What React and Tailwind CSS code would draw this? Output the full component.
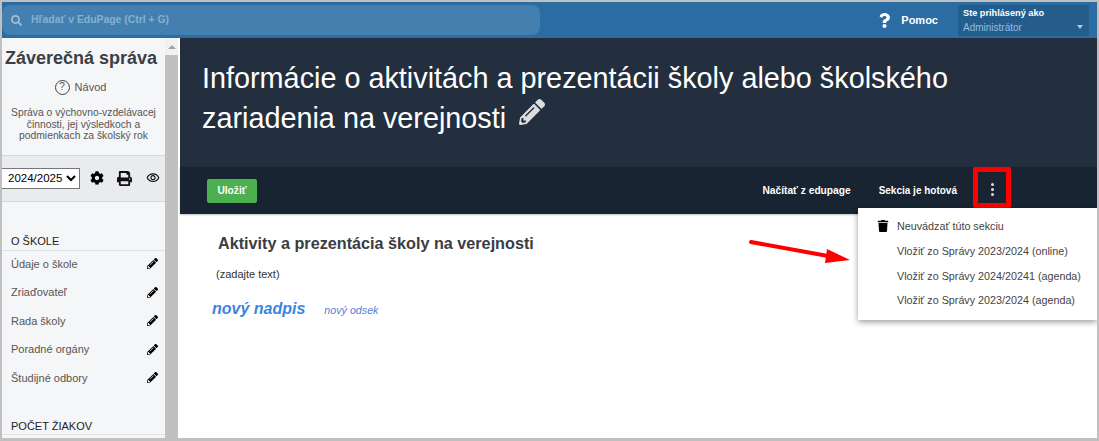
import React from 'react';
import { FaSearch, FaQuestion, FaCog, FaPrint, FaPencilAlt, FaTrash } from 'react-icons/fa';
import { MdOutlineVisibility } from 'react-icons/md';

const menuItems = ['Údaje o škole', 'Zriaďovateľ', 'Rada školy', 'Poradné orgány', 'Študijné odbory'];
const dropdownItems = ['Vložiť zo Správy 2023/2024 (online)', 'Vložiť zo Správy 2024/20241 (agenda)', 'Vložiť zo Správy 2023/2024 (agenda)'];

const Sidebar = () => (
  <aside className="w-[163px] shrink-0 bg-[#f5f6f8] overflow-hidden">
    <h1 className="pt-[9px] pl-[3px] text-[18px] leading-[22px] font-bold text-[#3c4045] whitespace-nowrap">Záverečná správa</h1>
    <div className="mt-[9px] pr-[6px] flex items-center justify-center gap-[5px] text-[11px] leading-[18px] text-[#555]">
      <span className="w-[15px] h-[15px] rounded-full border border-[#444] flex items-center justify-center text-[10px] leading-none">?</span>
      Návod
    </div>
    <p className="mt-[11px] text-center text-[10.3px] leading-[11.5px] text-[#555] whitespace-nowrap">
      Správa o výchovno-vzdelávacej<br />činnosti, jej výsledkoch a<br />podmienkach za školský rok
    </p>
    <div className="mt-[13px] h-[47px] bg-[#e9ebee] border-y border-[#d5d7da] flex items-center">
      <select defaultValue="2024/2025" className="-ml-[1px] w-[79px] h-[21px] pl-[2px] bg-white border border-[#767676] text-[11.5px] text-black">
        <option>2024/2025</option>
      </select>
      <FaCog className="ml-[10px] text-[14px] text-black" />
      <FaPrint className="ml-[13px] text-[15px] text-[#111]" />
      <MdOutlineVisibility className="ml-[14px] text-[14px] text-[#111]" />
    </div>
    <h2 className="mt-[32px] pl-[9px] pb-[1px] text-[11px] leading-[15px] text-[#222] border-b border-[#dfe1e5]">O ŠKOLE</h2>
    <ul className="-mt-[1px] mb-[27px]">
      {menuItems.map((item) => (
        <li key={item} className="h-[28.5px] pl-[9px] pr-[7px] flex items-center justify-between text-[11px] text-[#555]">
          {item}
          <FaPencilAlt className="text-[11px] text-black" />
        </li>
      ))}
    </ul>
    <h2 className="pl-[9px] text-[11px] leading-[15px] text-[#222] border-b border-[#dfe1e5]">POČET ŽIAKOV</h2>
  </aside>
);

const Dropdown = () => (
  <div className="absolute left-[678px] top-[170px] w-[239px] h-[112px] bg-white shadow-[0_2px_6px_rgba(0,0,0,0.4)] pt-[6px] text-[10.75px] text-[#444]">
    <div className="h-[24.7px] flex items-center pl-[19px]">
      <span className="w-[20px] shrink-0"><FaTrash className="text-[12px] text-black" /></span>
      Neuvádzať túto sekciu
    </div>
    {dropdownItems.map((item) => (
      <div key={item} className="h-[24.7px] flex items-center pl-[39px] whitespace-nowrap">{item}</div>
    ))}
  </div>
);

export default function App() {
  return (
    <div className="w-[1099px] h-[441px] bg-[#c0c0c0] pt-[2px] pl-[2px] pr-[2px] pb-[3px] font-['Liberation_Sans',Arial,sans-serif]">
      <div className="h-full flex flex-col overflow-hidden bg-white">
        <header className="h-[36px] shrink-0 bg-[#2b6ca3] flex items-center">
          <div className="w-[538px] h-[30px] rounded-[8px] bg-[#4380b0] flex items-center pl-[9px] text-[10.4px] font-bold text-[#86b0d0]">
            <FaSearch className="text-[11px] text-[#9cc0da] mr-[9px]" />
            Hľadať v EduPage (Ctrl + G)
          </div>
          <div className="ml-auto flex items-center text-white">
            <FaQuestion className="text-[15px]" />
            <span className="ml-[9px] text-[11px] font-bold">Pomoc</span>
          </div>
          <div className="ml-[20px] mr-[8px] w-[131px] h-[31px] rounded-[2px] bg-[#245d8c] px-[5px] pt-[1px] relative">
            <div className="text-[9.2px] leading-[14px] font-bold text-white">Ste prihlásený ako</div>
            <div className="text-[10px] leading-[16px] text-[#94bde0]">Administrátor</div>
            <span className="absolute right-[6px] bottom-[7px] border-x-[3px] border-x-transparent border-t-[4px] border-t-[#b5c9da]" />
          </div>
        </header>
        <div className="flex-1 flex min-h-0">
          <Sidebar />
          <div className="w-[13px] shrink-0 bg-[#c0c0c0] flex flex-col">
            <div className="h-[17px] bg-[#f1f1f1] flex items-center justify-center">
              <span className="border-x-[4px] border-x-transparent border-b-[4px] border-b-[#a3a3a3]" />
            </div>
          </div>
          <main className="relative flex-1 min-w-0 ml-[2px]">
            <div className="h-[129px] bg-[#232f3e] pl-[22px] pt-[20px] text-[28.8px] leading-[40px] text-white whitespace-nowrap">
              Informácie o aktivitách a prezentácii školy alebo školského<br />
              <span className="inline-flex items-center">zariadenia na verejnosti<FaPencilAlt className="ml-[13px] -mt-[12px] text-[26px] text-[#dcdcdc]" /></span>
            </div>
            <div className="h-[47px] bg-[#182431] flex items-center shadow-[0_1px_2px_rgba(0,0,0,0.25)] text-[10.2px] font-bold text-white">
              <button className="ml-[27px] w-[50px] h-[24px] rounded-[2px] bg-[#4caf50] text-[10.2px] font-bold">Uložiť</button>
              <span className="ml-auto">Načítať z edupage</span>
              <span className="ml-[28px] text-[10px]">Sekcia je hotová</span>
              <div className="ml-[16px] mr-[86px] self-start w-[38px] h-[41px] border-[5px] border-[#f00] rounded-[2px] pt-[4px] flex flex-col items-center justify-center gap-[2px]">
                <i className="w-[3px] h-[3px] rounded-full bg-[#ddd]" />
                <i className="w-[3px] h-[3px] rounded-full bg-[#ddd]" />
                <i className="w-[3px] h-[3px] rounded-full bg-[#ddd]" />
              </div>
            </div>
            <div className="pl-[38px] pt-[20px] text-[16.2px] leading-[18px] font-bold text-[#3a3d42]">Aktivity a prezentácia školy na verejnosti</div>
            <div className="pl-[36px] mt-[15px] text-[11px] leading-[14px] text-[#333]">(zadajte text)</div>
            <div className="pl-[32px] mt-[16px] flex items-baseline italic text-[#3a85e0]">
              <span className="text-[16px] font-bold">nový nadpis</span>
              <span className="ml-[19px] text-[10.7px] text-[#5a80d0]">nový odsek</span>
            </div>
            <Dropdown />
            <svg className="absolute left-[568px] top-[197px]" width="104" height="30" viewBox="0 0 104 30">
              <path d="M3 7 L80 21" stroke="#f00" strokeWidth="4" strokeLinecap="round" />
              <path d="M79 14 L102 25 L77 28 Z" fill="#f00" />
            </svg>
          </main>
        </div>
      </div>
    </div>
  );
}
